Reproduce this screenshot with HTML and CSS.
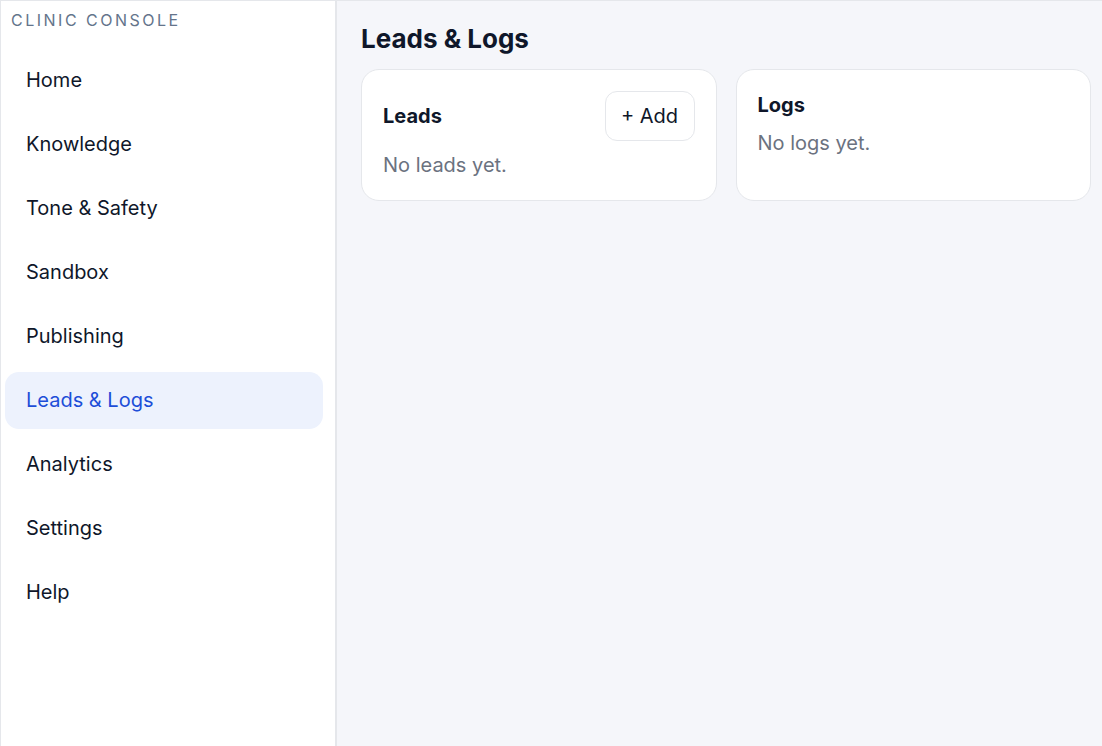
FILE: index.html
```html
<!DOCTYPE html>
<html>
<head>
<meta charset="utf-8">
<link rel="stylesheet" href="styles.css">
</head>
<body>
<div class="app">
  <aside class="sidebar">
    <div class="brand">CLINIC CONSOLE</div>
    <nav class="nav">
      <a class="nav-item">Home</a>
      <a class="nav-item">Knowledge</a>
      <a class="nav-item">Tone &amp; Safety</a>
      <a class="nav-item">Sandbox</a>
      <a class="nav-item">Publishing</a>
      <a class="nav-item active">Leads &amp; Logs</a>
      <a class="nav-item">Analytics</a>
      <a class="nav-item">Settings</a>
      <a class="nav-item">Help</a>
    </nav>
  </aside>
  <main class="main">
    <h1 class="title">Leads &amp; Logs</h1>
    <div class="cards">
      <section class="card">
        <div class="card-head">
          <h2 class="card-title">Leads</h2>
          <button class="btn">+ Add</button>
        </div>
        <p class="empty">No leads yet.</p>
      </section>
      <section class="card">
        <div class="card-head">
          <h2 class="card-title">Logs</h2>
        </div>
        <p class="empty">No logs yet.</p>
      </section>
    </div>
  </main>
</div>
</body>
</html>
```
FILE: styles.css
```css
* { box-sizing: border-box; }
html, body { margin: 0; height: 100%; }
body {
  font-family: Inter, "Noto Sans", sans-serif;
  color: #0f172a;
  background: #fff;
}
.app {
  display: flex;
  height: 746px;
  border-top: 1px solid #e5e7eb;
  border-left: 1px solid #e5e7eb;
}
.sidebar {
  width: 336px;
  flex: none;
  background: #fff;
  border-right: 2px solid #e5e7eb;
  padding: 9px 12px 0 4px;
}
.brand {
  font-size: 16px;
  letter-spacing: 2.5px;
  color: #64748b;
  padding-left: 6px;
  line-height: 20px;
}
.nav {
  display: flex;
  flex-direction: column;
  gap: 7px;
  margin-top: 22px;
}
.nav-item {
  display: block;
  height: 57px;
  line-height: 57px;
  padding-left: 21px;
  font-size: 20px;
  color: #0f172a;
  border-radius: 14px;
}
.nav-item.active {
  background: #edf2fd;
  color: #1d4ed8;
}
.main {
  flex: 1;
  background: #f5f6fa;
  padding: 20px 11px 0 24px;
}
.title {
  margin: 0;
  font-size: 26px;
  font-weight: 700;
  line-height: 36px;
  color: #0f172a;
}
.cards {
  display: grid;
  grid-template-columns: 1fr 1fr;
  gap: 19px;
  margin-top: 12px;
}
.card {
  background: #fff;
  border: 1px solid #e5e7eb;
  border-radius: 18px;
  height: 132px;
  padding: 21px 21px 0 21px;
}
.card-head {
  display: flex;
  justify-content: space-between;
  align-items: center;
}
.card-title {
  margin: 0;
  font-size: 20px;
  font-weight: 700;
  line-height: 28px;
}
.btn {
  font-family: inherit;
  font-size: 20px;
  color: #0f172a;
  background: #fff;
  border: 1px solid #e5e7eb;
  border-radius: 12px;
  height: 50px;
  width: 90px;
  padding: 0;
}
.empty {
  margin: 10px 0 0;
  font-size: 20px;
  line-height: 28px;
  color: #6b7280;
}
```
